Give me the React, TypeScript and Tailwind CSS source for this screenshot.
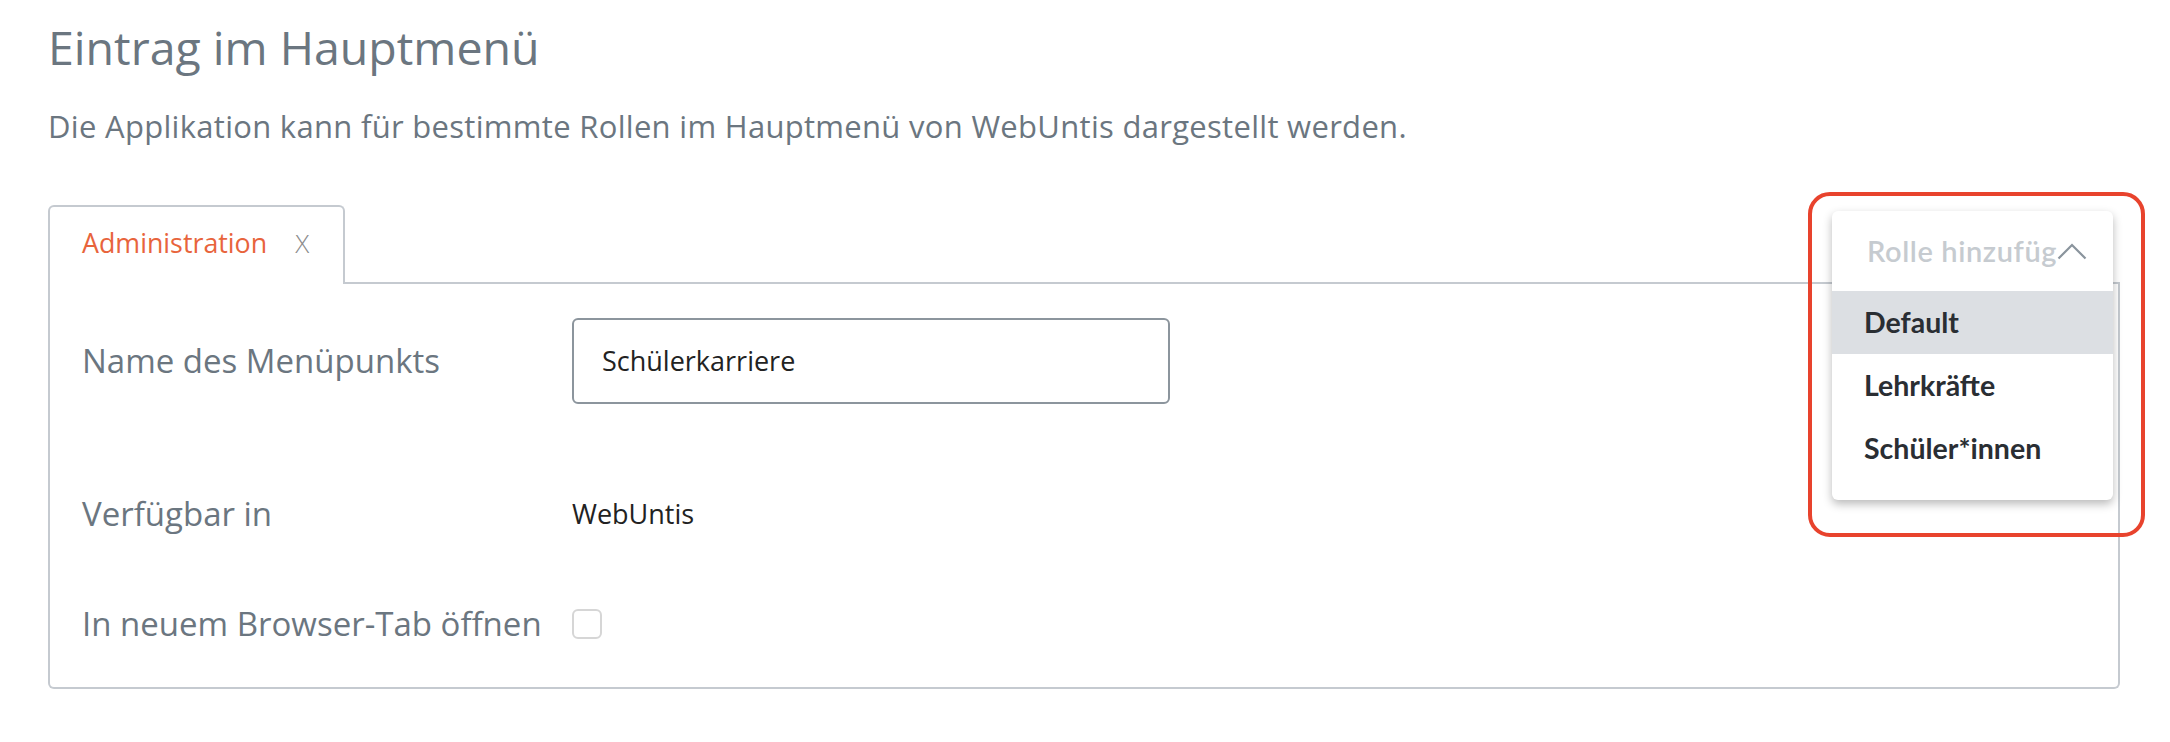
import { useState } from "react"

const roles = ["Default", "Lehrkräfte", "Schüler*innen"]

function Chevron() {
  return (
    <svg width="30" height="17" viewBox="0 0 30 17" fill="none" className="shrink-0">
      <path d="M1.5 15.5 L15 2 L28.5 15.5" stroke="#8a949d" strokeWidth="2.2" />
    </svg>
  )
}

function RoleDropdown() {
  const [active] = useState("Default")
  return (
    <div className="absolute left-[1832px] top-[211px] w-[281px] rounded-md bg-white font-['Lato',sans-serif] shadow-[0_4px_10px_rgba(0,0,0,0.28)]">
      <div className="flex h-[80px] items-center pl-[35px]">
        <div className="w-[190px] overflow-hidden whitespace-nowrap text-[29px] font-semibold tracking-[0.6px] text-[#c6cbd0]">
          Rolle hinzufügen
        </div>
        <Chevron />
      </div>
      <ul className="pb-[20px]">
        {roles.map((r) => (
          <li
            key={r}
            className={
              "flex h-[63px] items-center pl-[32px] text-[28.5px] font-bold text-[#2a2e33] " +
              (r === active ? "bg-[#dcdfe3]" : "")
            }
          >
            {r}
          </li>
        ))}
      </ul>
    </div>
  )
}

export default function App() {
  return (
    <div className="relative h-[742px] w-[2170px] overflow-hidden bg-white font-['Open_Sans',sans-serif]">
      <div className="pl-[48px] pr-[50px] pt-[19px]">
        <h1 className="text-[46.5px] leading-[56px] text-[#6b7680]">Eintrag im Hauptmenü</h1>
        <p className="mt-[33px] text-[31px] leading-[36px] tracking-[0.3px] text-[#6b7680]">
          Die Applikation kann für bestimmte Rollen im Hauptmenü von WebUntis dargestellt werden.
        </p>

        <div className="mt-[61px] flex">
          <div className="flex h-[79px] items-center gap-[28px] rounded-t-md border-x-2 border-t-2 border-[#c5cad0] pb-[4px] pl-[32px] pr-[34px]">
            <span className="text-[26.8px] text-[#e8643c]">Administration</span>
            <span className="text-[26px] font-light text-[#8c8c8c]">X</span>
          </div>
          <div className="flex-1 border-b-2 border-[#c5cad0]" />
        </div>

        <div className="rounded-b-md border-x-2 border-b-2 border-[#c5cad0] pb-[33px] pl-[32px] pt-[34px]">
          <div className="flex h-[86px] items-center">
            <div className="w-[490px] text-[33px] text-[#6b7680]">Name des Menüpunkts</div>
            <div className="flex h-[86px] w-[598px] items-center rounded-md border-2 border-[#8c959d] pl-[28px] text-[27px] text-[#222]">
              Schülerkarriere
            </div>
          </div>
          <div className="mt-[80px] flex h-[60px] items-center">
            <div className="w-[490px] text-[33px] text-[#6b7680]">Verfügbar in</div>
            <div className="text-[27px] text-[#222]">WebUntis</div>
          </div>
          <div className="mt-[50px] flex h-[60px] items-center">
            <div className="w-[490px] text-[33px] text-[#6b7680]">In neuem Browser-Tab öffnen</div>
            <div className="h-[30px] w-[30px] rounded-md border-2 border-[#d6d6d6]" />
          </div>
        </div>
      </div>

      <RoleDropdown />
      <div className="pointer-events-none absolute left-[1808px] top-[192px] h-[345px] w-[337px] rounded-[22px] border-[4px] border-[#e8432d]" />
    </div>
  )
}
